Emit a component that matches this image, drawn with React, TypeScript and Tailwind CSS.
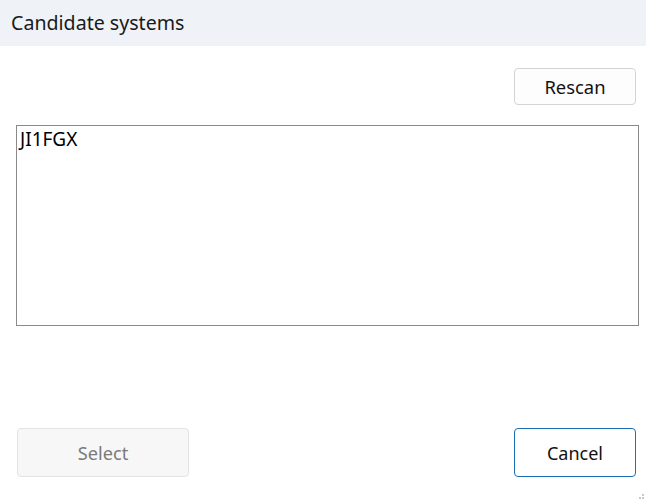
import React from "react";

export default function App() {
  return (
    <div
      className="relative flex h-[504px] w-[646px] flex-col bg-white text-black"
      style={{ fontFamily: '"Noto Sans", "Open Sans", sans-serif' }}
    >
      <div className="flex h-[46px] shrink-0 items-center bg-[#eff3f7] pl-[11px] text-[19.6px] text-[#1a1a1a]">
        Candidate systems
      </div>
      <div className="flex justify-end pr-[10px] pt-[22px]">
        <button className="flex h-[37px] w-[122px] items-center justify-center rounded-[4px] border border-[#d4d4d4] bg-[#fdfdfd] text-[18.4px] text-[#111]">
          Rescan
        </button>
      </div>
      <div className="ml-[16px] mr-[7px] mt-[20px] h-[201px] border border-[#8a8a8a] bg-white px-[3px] pt-[1px] text-[19px] leading-[24px]">
        JI1FGX
      </div>
      <div className="flex-1" />
      <div className="flex items-center justify-between pb-[27px] pl-[17px] pr-[10px]">
        <button
          disabled
          className="flex h-[49px] w-[172px] items-center justify-center rounded-[4px] border border-[#e3e3e3] bg-[#f7f7f7] pt-[2px] text-[18.2px] text-[#7a7a7a]"
        >
          Select
        </button>
        <button className="flex h-[49px] w-[122px] items-center justify-center rounded-[4px] border border-[#1f6fb5] bg-white pt-[2px] text-[18px] text-[#111]">
          Cancel
        </button>
      </div>
      <svg className="absolute bottom-[2px] right-[1px]" width="6" height="8" viewBox="0 0 6 8">
        <rect x="3" y="0" width="2" height="2" fill="#c8c8c8" />
        <rect x="0" y="3" width="2" height="2" fill="#c8c8c8" />
        <rect x="3" y="3" width="2" height="2" fill="#c8c8c8" />
      </svg>
    </div>
  );
}
